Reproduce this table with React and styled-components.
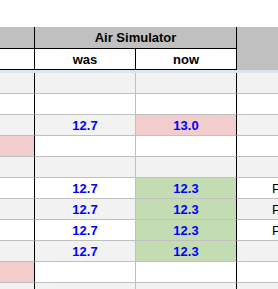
import React from "react";
import styled, { createGlobalStyle } from "styled-components";

const GlobalStyle = createGlobalStyle`
  html, body {
    margin: 0;
    padding: 0;
    background: #fff;
    overflow: hidden;
  }
  * {
    box-sizing: border-box;
  }
`;

const Page = styled.div`
  padding-top: 27px;
  width: 278px;
  height: 289px;
  overflow: hidden;
  font-family: "Liberation Sans", Arial, sans-serif;
  font-size: 13px;
`;

const Grid = styled.div`
  display: grid;
  grid-template-columns: 35px 101px 101px 100px;
  width: 337px;
`;

const HeadCell = styled.div`
  grid-column: ${(p) => p.$col || "auto"};
  grid-row: ${(p) => p.$row || "auto"};
  height: ${(p) => p.$h || 21}px;
  background: ${(p) => (p.$white ? "#fff" : "#c0c0c0")};
  border-right: ${(p) => (p.$noBorder ? "none" : "1px solid #000")};
  border-bottom: ${(p) => (p.$noBorder ? "none" : "1px solid #000")};
  display: flex;
  align-items: center;
  justify-content: center;
  font-weight: bold;
  color: #000;
`;

const Band = styled.div`
  grid-column: 1 / -1;
  height: 3px;
  background: #dce4ec;
`;

const fills = {
  pink: "#f2cdcd",
  green: "#c4dcb2",
};

const Cell = styled.div`
  height: 21px;
  background: ${(p) => fills[p.$fill] || (p.$alt ? "#f2f2f2" : "#fff")};
  border-bottom: 1px solid #c0c0c0;
  border-right: 1px solid ${(p) => (p.$dark ? "#000" : "#c0c0c0")};
  display: flex;
  align-items: center;
  justify-content: center;
  white-space: nowrap;
`;

const Value = styled.span`
  color: #0000ff;
  font-weight: bold;
`;

const Note = styled.span`
  color: #000;
`;

const rows = [
  {},
  {},
  { was: "12.7", now: "13.0", nowFill: "pink" },
  { leftFill: "pink" },
  {},
  { was: "12.7", now: "12.3", nowFill: "green", note: "Pass" },
  { was: "12.7", now: "12.3", nowFill: "green", note: "Pass" },
  { was: "12.7", now: "12.3", nowFill: "green", note: "Pass" },
  { was: "12.7", now: "12.3", nowFill: "green" },
  { leftFill: "pink" },
  {},
];

const App = () => {
  return (
    <Page>
      <GlobalStyle />
      <Grid>
        <HeadCell $col="1" $row="1" $h={22} />
        <HeadCell $col="2 / 4" $row="1" $h={22}>
          Air Simulator
        </HeadCell>
        <HeadCell $col="4" $row="1 / 3" $h={43} $noBorder />
        <HeadCell $col="1" $row="2" $white />
        <HeadCell $col="2" $row="2" $white>
          was
        </HeadCell>
        <HeadCell $col="3" $row="2" $white>
          now
        </HeadCell>
        <Band />
        {rows.map((row, i) => {
          const alt = i % 2 === 0;
          return (
            <React.Fragment key={i}>
              <Cell $alt={alt} $fill={row.leftFill} $dark />
              <Cell $alt={alt}>{row.was && <Value>{row.was}</Value>}</Cell>
              <Cell $alt={alt} $fill={row.nowFill} $dark>
                {row.now && <Value>{row.now}</Value>}
              </Cell>
              <Cell $alt={alt}>{row.note && <Note>{row.note}</Note>}</Cell>
            </React.Fragment>
          );
        })}
      </Grid>
    </Page>
  );
};

export default App;
